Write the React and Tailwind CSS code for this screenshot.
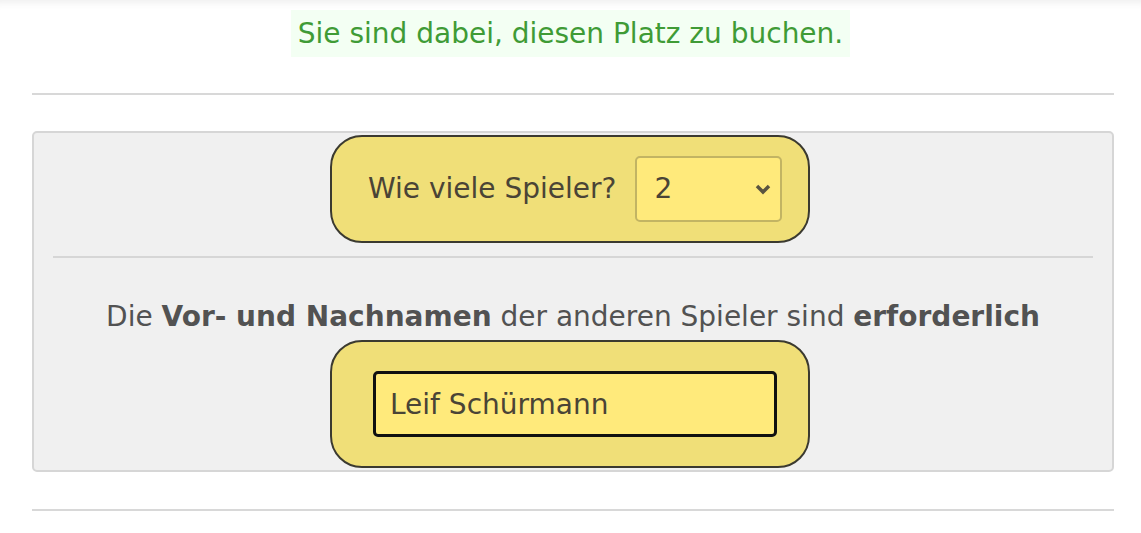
import React, { useState } from "react";

const font = { fontFamily: '"DejaVu Sans", Verdana, sans-serif' };

function App() {
  const [players, setPlayers] = useState("2");
  const [name, setName] = useState("Leif Schürmann");

  return (
    <div
      className="min-h-[533px] bg-white shadow-[inset_0_10px_8px_-8px_rgba(0,0,0,0.08)] pt-[10px]"
      style={font}
    >
      {/* Hinweis */}
      <div className="flex justify-center">
        <div className="h-[47px] flex items-center px-[7px] bg-[#f3fff3] text-[#3f9b36] text-[28px]">
          Sie sind dabei, diesen Platz zu buchen.
        </div>
      </div>

      <div className="ml-[32px] mr-[27px] mt-[36px] border-t-2 border-[#d8d8d8]" />

      {/* Buchungsbox */}
      <div className="ml-[32px] mr-[27px] mt-[36px] h-[341px] bg-[#f0f0f0] border-2 border-[#d6d6d6] rounded-[5px] flex flex-col items-center pt-[2px]">
        <div className="-ml-[6px] w-[480px] h-[108px] bg-[#f0df78] border-2 border-[#3b3a30] rounded-[32px] flex items-center pl-[36px] gap-[19px] text-[#4a4436] text-[28px]">
          <span>Wie viele Spieler?</span>
          <div className="relative">
            <select
              value={players}
              onChange={(e) => setPlayers(e.target.value)}
              className="appearance-none w-[147px] h-[66px] bg-[#ffea7b] border-2 border-[#c2b463] rounded-[5px] pl-[17px] text-[28px] text-[#4a4436] outline-none"
              style={font}
            >
              <option value="1">1</option>
              <option value="2">2</option>
              <option value="3">3</option>
              <option value="4">4</option>
            </select>
            <svg
              className="absolute right-[10px] top-1/2 -translate-y-1/2 pointer-events-none"
              width="18"
              height="12"
              viewBox="0 0 18 12"
            >
              <path d="M3 3 L9 9 L15 3" fill="none" stroke="#5a5440" strokeWidth="3.5" />
            </svg>
          </div>
        </div>

        <div className="self-stretch mx-[19px] mt-[13px] border-t-2 border-[#d6d6d6]" />

        <p className="mt-[45px] text-[28px] text-[#525252] leading-none">
          Die <b>Vor- und Nachnamen</b> der anderen Spieler sind <b>erforderlich</b>
        </p>

        <div className="-ml-[6px] mt-[9px] w-[480px] h-[128px] bg-[#f0df78] border-2 border-[#3b3a30] rounded-[32px] flex items-center pl-[41px]">
          <input
            value={name}
            onChange={(e) => setName(e.target.value)}
            className="w-[404px] h-[66px] bg-[#ffea7b] border-[3px] border-[#111] rounded-[5px] px-[14px] text-[28px] text-[#4a4436] outline-none"
            style={font}
          />
        </div>
      </div>

      <div className="ml-[32px] mr-[27px] mt-[37px] border-t-2 border-[#d8d8d8]" />
    </div>
  );
}

export default App;
